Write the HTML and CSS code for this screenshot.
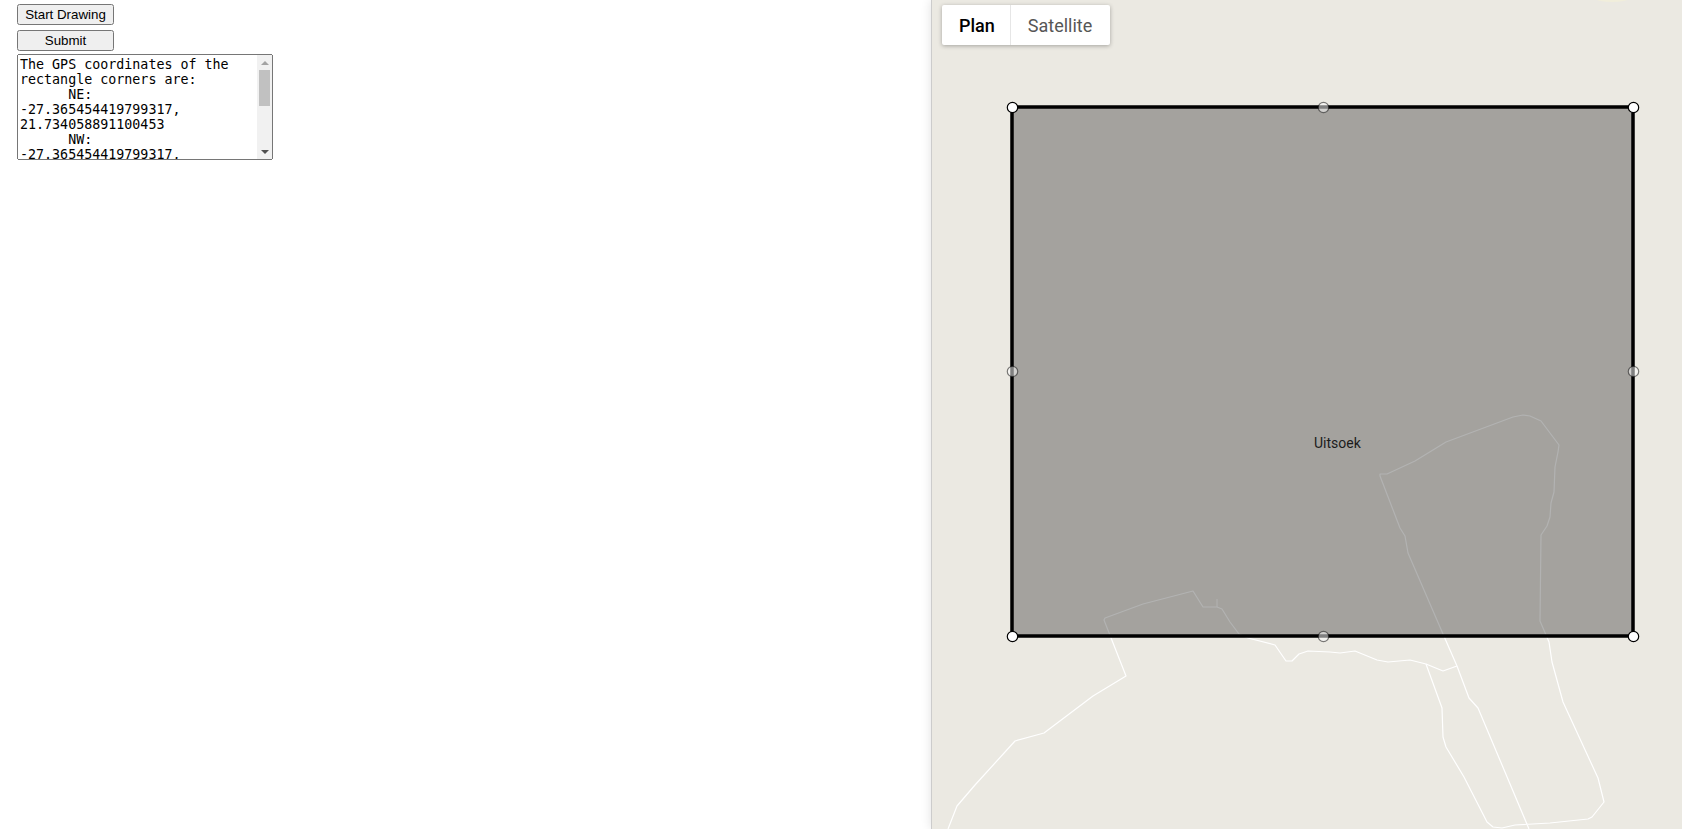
FILE: index.html
```html
<!DOCTYPE html>
<html lang="en">
<head>
  <meta charset="UTF-8">
  <meta name="viewport" content="width=device-width, initial-scale=1.0">
  <title>Draw Rectangle</title>
  <link rel="stylesheet" href="styles.css">
</head>
<body>
  <div class="panel">
    <button class="btn">Start Drawing</button>
    <button class="btn">Submit</button>
    <div class="output-wrap">
      <textarea class="output" readonly>The GPS coordinates of the rectangle corners are:
      NE: -27.365454419799317, 21.734058891100453
      NW: -27.365454419799317, 21.699726615709828
      SW: -27.396124615134214, 21.699726615709828
      SE: -27.396124615134214, 21.734058891100453</textarea>
      <div class="scrollbar">
        <div class="arrow up"></div>
        <div class="track"><div class="thumb"></div></div>
        <div class="arrow down"></div>
      </div>
    </div>
  </div>

  <div class="map">
    <svg class="map-canvas" viewBox="932 0 750 829">
      <ellipse class="patch" cx="1612" cy="-1" rx="16" ry="3"/>

      <!-- roads -->
      <polyline class="road" points="948,829 957,806 975,785 1015,741 1044,733 1093,696 1126,676 1104,620 1105,618 1143,604 1193,591 1203,607 1217,607 1222,609 1230,622 1239,634 1248,638 1275,645 1286,661 1292,661 1299,654 1308,651 1330,652 1340,653 1355,651 1377,660 1388,662 1410,660 1426,664 1443,671 1457,666"/>
      <polyline class="road thin" points="1217,599 1217,607"/>
      <polyline class="road" points="1426,664 1442,708 1443,737 1446,747 1464,777 1487,822 1493,827 1502,828 1515,825 1550,823 1588,819 1592,817 1604,802 1598,778 1563,702 1552,662 1549,642 1540,621 1541,535 1547,526 1550,517 1551,503 1554,492 1555,467 1558,452 1559,445 1541,421 1530,416 1523,415 1513,417 1446,442 1415,461 1387,474 1380,474 1380,476 1400,528 1405,536 1408,553 1443,634 1457,666 1469,698 1478,708 1529,829"/>

      <!-- drawn rectangle -->
      <rect class="shape" x="1012" y="107" width="621" height="529"/>

      <circle class="handle mid" cx="1323.5" cy="107.5" r="5.2"/>
      <circle class="handle mid" cx="1012.5" cy="371.5" r="5.2"/>
      <circle class="handle mid" cx="1633.5" cy="371.5" r="5.2"/>
      <circle class="handle mid" cx="1323.5" cy="636.5" r="5.2"/>
      <circle class="handle" cx="1012.5" cy="107.5" r="5.2"/>
      <circle class="handle" cx="1633.5" cy="107.5" r="5.2"/>
      <circle class="handle" cx="1012.5" cy="636.5" r="5.2"/>
      <circle class="handle" cx="1633.5" cy="636.5" r="5.2"/>
    </svg>

    <span class="place">Uitsoek</span>

    <div class="map-type">
      <div class="map-type-btn active">Plan</div>
      <div class="map-type-btn">Satellite</div>
    </div>
  </div>
</body>
</html>
```

FILE: styles.css
```css
html, body {
  height: 100%;
}
body {
  margin: 0;
  display: flex;
  overflow: hidden;
  background: #fff;
}
.panel {
  width: 931px;
  flex: none;
  padding: 4px 0 0 17px;
  box-sizing: border-box;
}
.btn {
  display: block;
  width: 97px;
  height: 21px;
  padding: 1px 6px;
  margin-bottom: 5px;
  font-family: "Liberation Sans", Arial, sans-serif;
  font-size: 13.333px;
  color: #000;
}
.output-wrap {
  position: relative;
  width: 256px;
  height: 106px;
  margin-top: -2px;
}
.output {
  display: block;
  width: 100%;
  height: 100%;
  padding: 2px 17px 2px 2px;
  box-sizing: border-box;
  font-family: "DejaVu Sans Mono", monospace;
  font-size: 13.333px;
  resize: none;
}
/* headless chrome hides the native scrollbar, so it is drawn over the textarea */
.scrollbar {
  position: absolute;
  top: 1px;
  right: 1px;
  bottom: 1px;
  width: 15px;
  display: flex;
  flex-direction: column;
  background: #f1f1f1;
}
.arrow {
  height: 15px;
  flex: none;
  display: flex;
  align-items: center;
  justify-content: center;
}
.arrow::before {
  content: "";
  border-left: 4px solid transparent;
  border-right: 4px solid transparent;
}
.arrow.up::before {
  border-bottom: 4px solid #a3a3a3;
}
.arrow.down::before {
  border-top: 4px solid #505050;
}
.track {
  flex: 1;
}
.thumb {
  height: 36px;
  margin: 0 2px;
  background: #c1c1c1;
}
.map {
  flex: 1;
  position: relative;
  overflow: hidden;
  background: #ebe9e2;
  border-left: 1px solid #ccc;
  box-shadow: 0 0 10px rgba(0, 0, 0, 0.12);
}
.map-canvas {
  display: block;
  width: 750px;
  height: 829px;
}
.patch {
  fill: #f1eedb;
}
.road {
  fill: none;
  stroke: #fff;
  stroke-width: 1.2;
  stroke-linejoin: round;
}
.road.thin {
  stroke-width: 1;
}
.shape {
  fill: rgba(0, 0, 0, 0.3);
  stroke: #000;
  stroke-width: 3.5;
}
.handle {
  fill: #fff;
  stroke: #000;
  stroke-width: 1.2;
}
.handle.mid {
  fill: rgba(255, 255, 255, 0.5);
  stroke: rgba(0, 0, 0, 0.5);
}
.place {
  position: absolute;
  left: 382px;
  top: 434px;
  font-family: Roboto, sans-serif;
  font-size: 14px;
  line-height: 18px;
  color: #1c1c1c;
}
.map-type {
  position: absolute;
  left: 10px;
  top: 5px;
  display: flex;
  height: 40px;
  background: #fff;
  border-radius: 2px;
  box-shadow: 0 1px 4px rgba(0, 0, 0, 0.3);
}
.map-type-btn {
  padding: 0 18px 0 17px;
  line-height: 41px;
  font-family: Roboto, sans-serif;
  font-size: 18px;
  color: #565656;
}
.map-type-btn.active {
  padding-right: 15px;
  font-weight: 500;
  color: #000;
  border-right: 1px solid #e6e6e6;
}
```
